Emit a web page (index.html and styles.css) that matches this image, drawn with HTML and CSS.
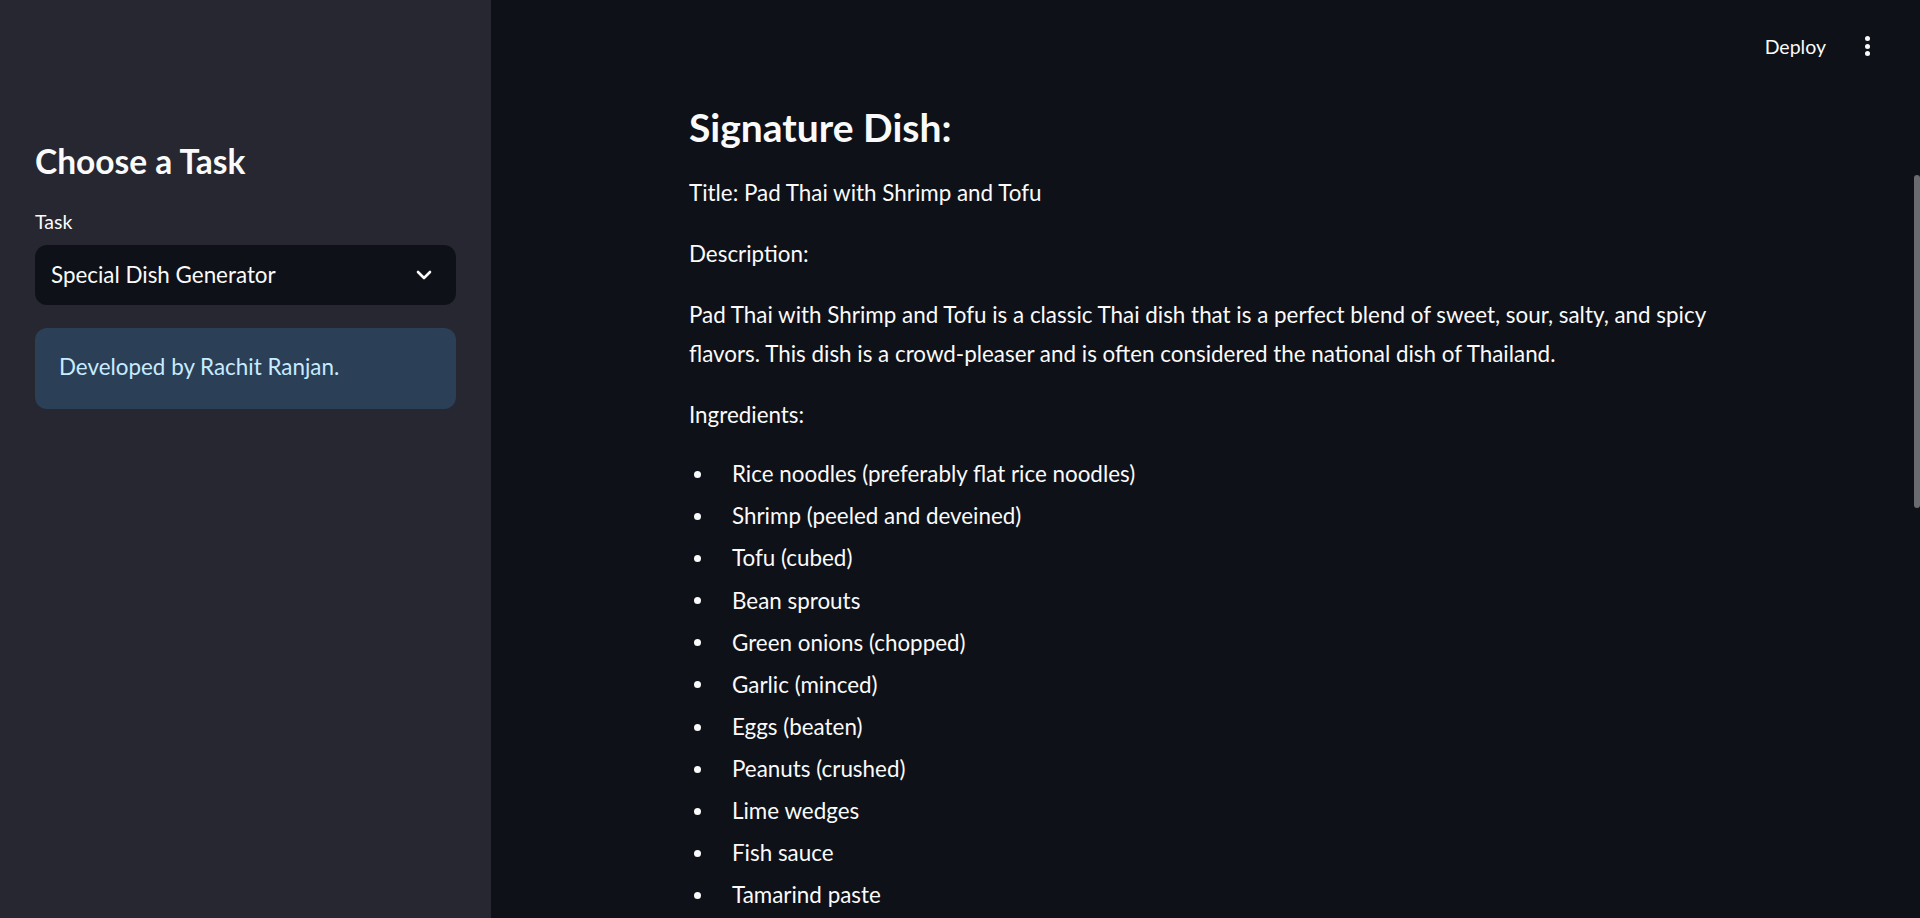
FILE: index.html
```html
<!DOCTYPE html>
<html lang="en">
<head>
<meta charset="utf-8">
<title>Special Dish Generator</title>
<link rel="stylesheet" href="styles.css">
</head>
<body>
<div class="app">
  <aside class="sidebar">
    <h2 class="side-title">Choose a Task</h2>
    <div class="field-label">Task</div>
    <div class="select">
      <span class="select-value">Special Dish Generator</span>
      <svg class="chevron" width="16" height="10" viewBox="0 0 16 10"><path d="M2 2 L8 8 L14 2" fill="none" stroke="#fafafa" stroke-width="2.6" stroke-linecap="round" stroke-linejoin="round"/></svg>
    </div>
    <div class="info">Developed by Rachit Ranjan.</div>
  </aside>
  <main class="main">
    <header class="toolbar">
      <span class="deploy">Deploy</span>
      <span class="kebab"><i></i><i></i><i></i></span>
    </header>
    <section class="content">
      <h3 class="dish-title">Signature Dish:</h3>
      <p>Title: Pad Thai with Shrimp and Tofu</p>
      <p>Description:</p>
      <p>Pad Thai with Shrimp and Tofu is a classic Thai dish that is a perfect blend of sweet, sour, salty, and spicy flavors. This dish is a crowd-pleaser and is often considered the national dish of Thailand.</p>
      <p>Ingredients:</p>
      <ul class="list">
        <li>Rice noodles (preferably flat rice noodles)</li>
        <li>Shrimp (peeled and deveined)</li>
        <li>Tofu (cubed)</li>
        <li>Bean sprouts</li>
        <li>Green onions (chopped)</li>
        <li>Garlic (minced)</li>
        <li>Eggs (beaten)</li>
        <li>Peanuts (crushed)</li>
        <li>Lime wedges</li>
        <li>Fish sauce</li>
        <li>Tamarind paste</li>
      </ul>
    </section>
    <div class="scroll-thumb"></div>
  </main>
</div>
</body>
</html>
```

FILE: styles.css
```css
* { box-sizing: border-box; }
html, body {
  margin: 0;
  height: 100%;
  overflow: hidden;
  background: #0e1117;
  color: #fafafa;
  font-family: Lato, "Noto Sans", sans-serif;
}
.app {
  display: flex;
  height: 100vh;
}
.sidebar {
  width: 491px;
  flex: none;
  background: #262730;
  padding: 139.5px 35px 0 35px;
  display: flex;
  flex-direction: column;
}
.side-title {
  margin: 0;
  font-size: 33.5px;
  line-height: 43.2px;
  font-weight: 700;
}
.field-label {
  margin-top: 22px;
  font-size: 19.5px;
  line-height: 33.6px;
}
.select {
  margin-top: 6.7px;
  height: 60px;
  background: #0e1117;
  border-radius: 12px;
  display: flex;
  align-items: center;
  justify-content: space-between;
  padding: 0 24px 0 16px;
  font-size: 22.4px;
}
.chevron { display: block; }
.info {
  margin-top: 23px;
  background: #2b3f57;
  color: #c7ebff;
  border-radius: 12px;
  padding: 20px 24px 22.6px;
  font-size: 22.4px;
  line-height: 38.4px;
}
.main {
  flex: 1;
  position: relative;
  display: flex;
  flex-direction: column;
}
.toolbar {
  height: 90px;
  flex: none;
  display: flex;
  justify-content: flex-end;
  align-items: flex-start;
  padding: 29.7px 46px 0 0;
}
.deploy {
  font-size: 19.5px;
  line-height: 33.6px;
}
.kebab {
  margin-left: 34px;
  height: 33.6px;
  width: 14px;
  display: flex;
  flex-direction: column;
  align-items: center;
  justify-content: center;
  gap: 2.5px;
}
.kebab i {
  display: block;
  width: 5px;
  height: 5px;
  border-radius: 50%;
  background: #fafafa;
}
.content {
  padding: 13.5px 0 0 198px;
  width: 1238px;
  font-size: 22.4px;
  line-height: 38.4px;
}
.dish-title {
  margin: 0 0 23.8px;
  font-size: 39px;
  line-height: 46.8px;
  font-weight: 700;
}
.content p {
  margin: 0 0 22.6px;
}
.content p:last-of-type {
  margin-bottom: 21.4px;
}
.list {
  margin: 0;
  padding: 0;
  list-style: none;
}
.list li {
  display: flex;
  align-items: center;
  margin-top: 3.7px;
}
.list li:first-child { margin-top: 0; }
.list li::before {
  content: "";
  flex: none;
  width: 7px;
  height: 7px;
  border-radius: 50%;
  background: #fafafa;
  margin: 0 31px 0 5px;
}
.scroll-thumb {
  position: absolute;
  right: 0;
  top: 175px;
  width: 6px;
  height: 333px;
  border-radius: 3px;
  background: #6a6b70;
}
```
